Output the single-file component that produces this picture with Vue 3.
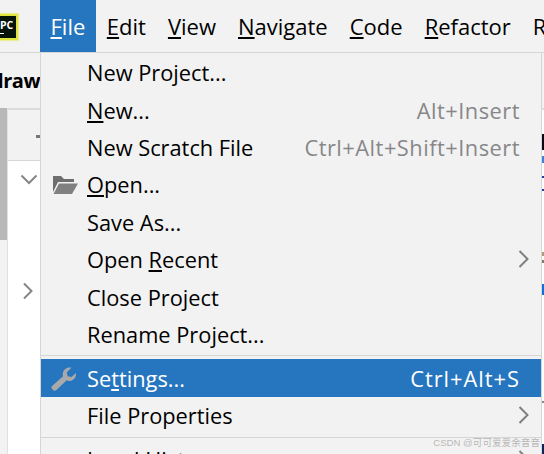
<template>
  <div class="window">
    <!-- Main menu bar -->
    <div class="menubar">
      <div class="logo">
        <div class="logo__box">
          <span class="logo__text">PC</span>
          <span class="logo__dash"></span>
        </div>
      </div>
      <div
        v-for="(m, i) in menus"
        :key="m.label"
        class="menubar__item"
        :class="{ 'menubar__item--active': i === 0 }"
      >
        <u v-if="m.hot">{{ m.label[0] }}</u>{{ m.hot ? m.label.slice(1) : m.label }}
      </div>
    </div>

    <div class="body">
      <!-- Project pane sticking out on the left -->
      <div class="side">
        <div class="side__title"><span>draw</span></div>
        <div class="side__main">
          <div class="side__scroll"></div>
          <div class="side__tree">
            <div class="side__tools"><span class="side__dash"></span></div>
            <svg class="side__arrow side__arrow--down" width="18" height="12" viewBox="0 0 18 12">
              <path d="M1.500 1.500l7.500 7.500 7.500-7.500" fill="none" stroke="#868686" stroke-width="2" />
            </svg>
            <svg class="side__arrow side__arrow--right" width="12" height="18" viewBox="0 0 12 18">
              <path d="M2 1.500l7.500 7.500-7.500 7.500" fill="none" stroke="#868686" stroke-width="2" />
            </svg>
          </div>
        </div>
      </div>

      <!-- File menu -->
      <div class="menu">
        <template v-for="(row, i) in rows" :key="i">
          <div v-if="row.sep" class="menu__sep"></div>
          <div v-else class="menu__row" :class="{ 'menu__row--active': row.active }">
            <span class="menu__icon">
              <svg v-if="row.icon === 'folder'" width="26" height="20" viewBox="0 0 26 20">
                <path d="M1 17V1h8l3 3h10v3H6L1 17z" fill="#6e6e6e" />
                <path d="M7 8.500h19L20 19H1.500L7 8.500z" fill="#808080" />
              </svg>
              <svg v-if="row.icon === 'wrench'" class="menu__wrench" width="26" height="26" viewBox="0 0 28 28">
                <path
                  d="M2 23l12-11c-1-4 1-8 5-9 1.500-.5 3-.3 4 0l-5 5 1 4 4 1 5-4.500c.5 4-1.500 7.500-5 8.500-2 .5-3.500.3-5-.5L7 27c-1 1-2 1-3 .5l-2-2c-.7-.8-.7-1.700 0-2.500z"
                  fill="#a9a9a9"
                />
              </svg>
            </span>
            <span class="menu__label">
              {{ row.before }}<u v-if="row.hot">{{ row.hot }}</u>{{ row.after }}
            </span>
            <span v-if="row.keys" class="menu__keys">{{ row.keys }}</span>
            <svg v-if="row.sub" class="menu__sub" width="12" height="18" viewBox="0 0 12 18">
              <path d="M1.500 1l8 8-8 8" fill="none" stroke="#7f7f7f" stroke-width="2" />
            </svg>
          </div>
        </template>
      </div>

      <!-- Sliver of the editor on the right -->
      <div class="editor">
        <span
          v-for="(mark, i) in editorMarks"
          :key="i"
          class="editor__mark"
          :style="{ top: mark.top + 'px', height: mark.height + 'px', background: mark.color }"
        ></span>
      </div>
    </div>

    <div class="watermark">CSDN @可可爱爱余音音</div>
  </div>
</template>

<script setup>
const menus = [
  { label: 'File', hot: true },
  { label: 'Edit', hot: true },
  { label: 'View', hot: true },
  { label: 'Navigate', hot: true },
  { label: 'Code', hot: true },
  { label: 'Refactor', hot: true },
  { label: 'R', hot: false },
]

const rows = [
  { before: 'New Project...' },
  { hot: 'N', after: 'ew...', keys: 'Alt+Insert' },
  { before: 'New Scratch File', keys: 'Ctrl+Alt+Shift+Insert' },
  { hot: 'O', after: 'pen...', icon: 'folder' },
  { before: 'Save As...' },
  { before: 'Open ', hot: 'R', after: 'ecent', sub: true },
  { before: 'Close Project' },
  { before: 'Rename Project...' },
  { sep: true },
  { before: 'Se', hot: 't', after: 'tings...', icon: 'wrench', keys: 'Ctrl+Alt+S', active: true },
  { before: 'File Properties', sub: true },
  { sep: true },
  { before: 'Local History', sub: true },
]

// bits of editor text showing past the menu's right edge, top is from the editor's top
const editorMarks = [
  { top: 24, height: 16, color: '#0a0a14' },
  { top: 46, height: 7, color: '#3b82d8' },
  { top: 66, height: 2, color: '#1a3fa8' },
  { top: 79, height: 2, color: '#1a3fa8' },
  { top: 142, height: 4, color: '#b09a78' },
  { top: 150, height: 3, color: '#8a7a6a' },
  { top: 174, height: 11, color: '#0a6fe0' },
  { top: 291, height: 2, color: '#888888' },
  { top: 334, height: 12, color: '#12235a' },
]
</script>

<style>
html,
body {
  margin: 0;
  overflow: hidden;
}
</style>

<style scoped>
.window {
  position: relative;
  width: 544px;
  height: 454px;
  overflow: hidden;
  background: #f2f2f2;
  font-family: "Open Sans", "Noto Sans CJK SC", sans-serif;
  color: #000;
}

.menubar {
  display: flex;
  height: 52px;
  box-sizing: content-box;
  border-bottom: 1px solid #d6d6d6;
  font-size: 22px;
  white-space: nowrap;
}

.logo {
  width: 40px;
  flex: none;
  overflow: hidden;
  position: relative;
}

.logo__box {
  position: absolute;
  left: -11px;
  top: 14px;
  width: 25px;
  height: 22px;
  background: #07140a;
  border: 2px solid #dfe53c;
  box-shadow: 0 0 1px 1px #ecee9c;
}

.logo__text {
  position: absolute;
  left: 9px;
  top: 3px;
  font-size: 10.500px;
  font-weight: 700;
  line-height: 13px;
  color: #fff;
}

.logo__dash {
  position: absolute;
  left: 9px;
  top: 17px;
  width: 4px;
  height: 1px;
  background: #fff;
}

.menubar__item {
  padding: 0 11px;
  line-height: 52px;
}

.menubar__item--active {
  padding: 0 10.500px;
  background: #2675bf;
  color: #fff;
}

.body {
  display: flex;
  height: 401px;
}

.side {
  width: 40px;
  flex: none;
  display: flex;
  flex-direction: column;
}

.side__title {
  height: 55px;
  display: flex;
  justify-content: flex-end;
  align-items: center;
  overflow: hidden;
  font-size: 20px;
  font-weight: 700;
  letter-spacing: -0.5px;
}

.side__main {
  flex: 1;
  display: flex;
}

.side__scroll {
  width: 7px;
  height: 132px;
  background: #b8b8b8;
}

.side__tree {
  flex: 1;
  background: #fff;
  position: relative;
  border-left: 1px solid #e0e0e0;
}

.side__tools {
  height: 50px;
  background: #f2f2f2;
  border-top: 2px solid #dcdcdc;
  border-bottom: 1px solid #d6d6d6;
  position: relative;
}

.side__dash {
  position: absolute;
  right: 0;
  top: 25px;
  width: 4px;
  height: 3px;
  background: #777;
}

.side__arrow {
  position: absolute;
}

.side__arrow--down {
  left: 12px;
  top: 66px;
}

.side__arrow--right {
  left: 14px;
  top: 174px;
}

.menu {
  width: 502px;
  flex: none;
  box-sizing: border-box;
  border-left: 1px solid #d6d6d6;
  border-right: 1px solid #d6d6d6;
  padding-top: 1px;
  font-size: 21.800px;
  white-space: nowrap;
}

.menu__row {
  display: flex;
  align-items: center;
  box-sizing: border-box;
  height: 37.400px;
  padding-left: 11px;
  padding-right: 21px;
  position: relative;
}

.menu__row--active {
  background: #2675bf;
  color: #fff;
  height: 38px;
}

.menu__icon {
  width: 35px;
  flex: none;
  display: flex;
  align-items: center;
}

.menu__wrench {
  margin-left: -2px;
}

.menu__label {
  flex: 1;
}

.menu__keys {
  color: #87878a;
  letter-spacing: 0.5px;
}

.menu__row--active .menu__keys {
  color: #fff;
  letter-spacing: 1px;
}

.menu__sub {
  position: absolute;
  right: 11px;
  top: 9px;
}

.menu__sep {
  height: 1px;
  background: #d6d6d6;
  margin: 2px 0 3px;
}

.editor {
  flex: 1;
  background: #fff;
  margin-top: 55px;
  border-top: 2px solid #dcdcdc;
  position: relative;
}

.editor__mark {
  position: absolute;
  left: 0;
  width: 2px;
}

.watermark {
  position: absolute;
  right: 4px;
  bottom: 4px;
  font-family: "Liberation Sans", "Noto Sans CJK SC", sans-serif;
  font-size: 9.600px;
  line-height: 14px;
  color: rgba(120, 120, 120, 0.5);
}
</style>
